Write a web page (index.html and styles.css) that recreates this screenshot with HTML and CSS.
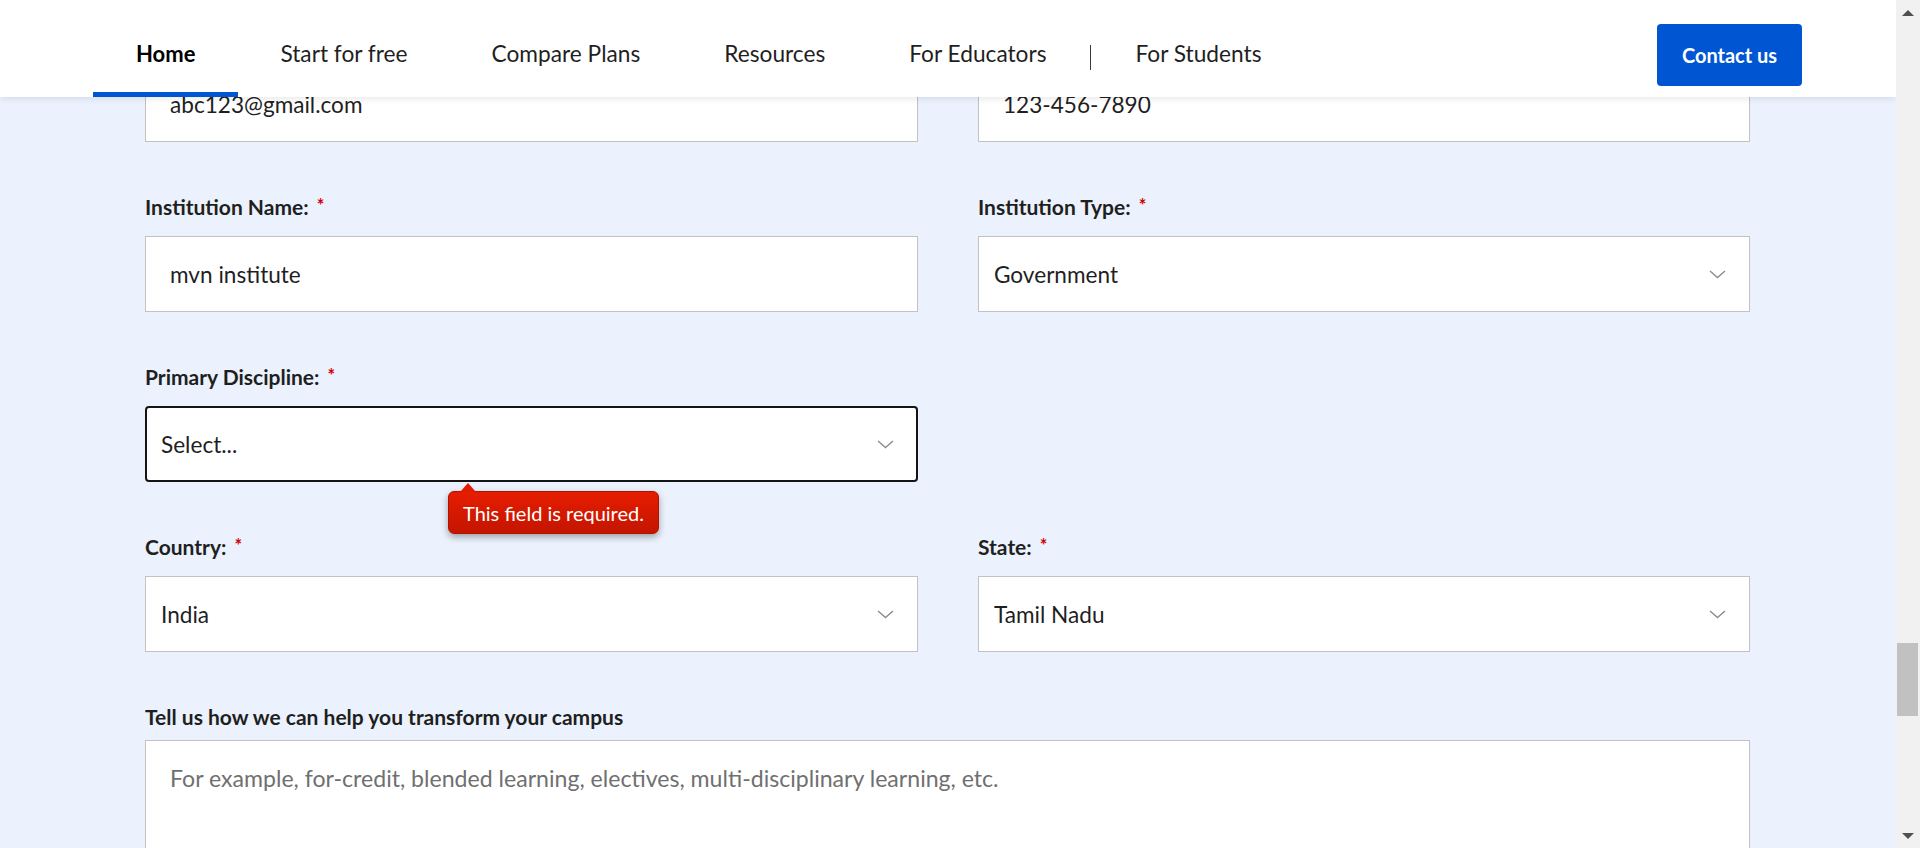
FILE: index.html
```html
<!DOCTYPE html>
<html lang="en">
<head>
<meta charset="utf-8">
<title>Contact form</title>
<link rel="stylesheet" href="styles.css">
</head>
<body>
<div class="viewport">
  <div class="page">
    <header class="nav">
      <nav class="nav-links">
        <a class="nav-link active" href="#">Home</a>
        <a class="nav-link" href="#">Start for free</a>
        <a class="nav-link" href="#">Compare Plans</a>
        <a class="nav-link" href="#">Resources</a>
        <a class="nav-link" href="#">For Educators</a>
        <span class="nav-sep"></span>
        <a class="nav-link" href="#">For Students</a>
      </nav>
      <a class="contact-btn" href="#">Contact us</a>
    </header>

    <form class="form">
      <div class="field">
        <div class="label label-hidden"></div>
        <input class="text-input" type="text" aria-label="Email" value="abc123@gmail.com">
      </div>
      <div class="field">
        <div class="label label-hidden"></div>
        <input class="text-input" type="text" aria-label="Phone" value="123-456-7890">
      </div>

      <div class="field">
        <label class="label">Institution Name:<span class="req">*</span></label>
        <input class="text-input" type="text" value="mvn institute">
      </div>
      <div class="field">
        <label class="label">Institution Type:<span class="req">*</span></label>
        <div class="select-wrap">
          <select class="select"><option>Government</option></select>
          <svg class="chev" width="17" height="9" viewBox="0 0 17 9"><polyline points="1,1 8.5,7.5 16,1" fill="none" stroke="#8c8c8c" stroke-width="1.4"/></svg>
        </div>
      </div>

      <div class="field">
        <label class="label">Primary Discipline:<span class="req">*</span></label>
        <div class="select-wrap">
          <select class="select select-focus"><option>Select...</option></select>
          <svg class="chev" width="17" height="9" viewBox="0 0 17 9"><polyline points="1,1 8.5,7.5 16,1" fill="none" stroke="#8c8c8c" stroke-width="1.4"/></svg>
          <div class="tooltip">This field is required.</div>
        </div>
      </div>
      <div class="field"></div>

      <div class="field">
        <label class="label">Country:<span class="req">*</span></label>
        <div class="select-wrap">
          <select class="select"><option>India</option></select>
          <svg class="chev" width="17" height="9" viewBox="0 0 17 9"><polyline points="1,1 8.5,7.5 16,1" fill="none" stroke="#8c8c8c" stroke-width="1.4"/></svg>
        </div>
      </div>
      <div class="field">
        <label class="label">State:<span class="req">*</span></label>
        <div class="select-wrap">
          <select class="select"><option>Tamil Nadu</option></select>
          <svg class="chev" width="17" height="9" viewBox="0 0 17 9"><polyline points="1,1 8.5,7.5 16,1" fill="none" stroke="#8c8c8c" stroke-width="1.4"/></svg>
        </div>
      </div>

      <div class="field field-wide">
        <label class="label label-tight">Tell us how we can help you transform your campus</label>
        <textarea class="textarea" placeholder="For example, for-credit, blended learning, electives, multi-disciplinary learning, etc."></textarea>
      </div>
    </form>
  </div>

  <div class="scrollbar">
    <div class="sb-btn"><span class="arrow-up"></span></div>
    <div class="sb-track"><div class="sb-thumb"></div></div>
    <div class="sb-btn"><span class="arrow-down"></span></div>
  </div>
</div>
</body>
</html>
```

FILE: styles.css
```css
* { box-sizing: border-box; }

html, body {
  margin: 0;
  padding: 0;
  height: 848px;
  overflow: hidden;
}

body {
  font-family: Lato, "Noto Sans", sans-serif;
  color: #1f1f1f;
}

.viewport {
  display: flex;
  width: 1920px;
  height: 848px;
}

.page {
  flex: 1;
  position: relative;
  overflow: hidden;
  background: #ebf2fd;
}

/* ---------- header ---------- */
.nav {
  position: absolute;
  top: 0;
  left: 0;
  right: 0;
  height: 97px;
  padding: 10px 94px 0 93px;
  background: #ffffff;
  box-shadow: 0 2px 7px rgba(0, 0, 0, 0.09);
  display: flex;
  justify-content: space-between;
  align-items: stretch;
  z-index: 5;
}

.nav-links {
  display: flex;
  align-items: stretch;
}

.nav-link {
  position: relative;
  display: flex;
  align-items: center;
  padding: 0 42px;
  font-size: 22.7px;
  color: #1f1f1f;
  text-decoration: none;
  white-space: nowrap;
}

.nav-link.active {
  font-weight: 700;
  color: #000;
  font-size: 22px;
  padding: 0 43px;
}

.nav-link.active::after {
  content: "";
  position: absolute;
  left: 0;
  right: 0;
  bottom: 0;
  height: 5px;
  background: #0056d2;
}

.nav-sep {
  align-self: center;
  width: 1px;
  height: 25px;
  margin: 8px 2px 0 2px;
  background: #3a3a3a;
}

.contact-btn {
  align-self: center;
  margin-top: 3px;
  width: 145px;
  height: 62px;
  border-radius: 4px;
  background: #0056d2;
  color: #fff;
  font-size: 20px;
  font-weight: 700;
  text-decoration: none;
  display: flex;
  align-items: center;
  justify-content: center;
}

/* ---------- form ---------- */
.form {
  display: grid;
  grid-template-columns: 773px 772px;
  column-gap: 60px;
  row-gap: 53px;
  padding: 25px 0 0 145px;
}

.field {
  display: flex;
  flex-direction: column;
}

.field-wide {
  grid-column: 1 / -1;
}

.label {
  display: flex;
  align-items: center;
  height: 24px;
  padding-bottom: 2px;
  margin-bottom: 17px;
  font-size: 21px;
  font-weight: 700;
  color: #1f1f1f;
}

.label-tight {
  margin-bottom: 11px;
}

.req {
  color: #d10000;
  font-size: 18px;
  margin-left: 8px;
  position: relative;
  top: -1px;
}

.text-input {
  height: 76px;
  border: 1px solid #c2c2c2;
  border-radius: 0;
  background: #fff;
  padding: 0 24px;
  font-family: Lato, "Noto Sans", sans-serif;
  font-size: 22.6px;
  color: #1f1f1f;
  outline: none;
}

.select-wrap {
  position: relative;
  display: flex;
}

.select {
  flex: 1;
  height: 76px;
  border: 1px solid #c2c2c2;
  border-radius: 0;
  background: #fff;
  padding: 0 50px 0 15px;
  font-family: Lato, "Noto Sans", sans-serif;
  font-size: 22.6px;
  color: #1f1f1f;
  appearance: none;
  -webkit-appearance: none;
  outline: none;
}

.select-focus {
  border: 2px solid #141414;
  border-radius: 4px;
  padding-left: 14px;
}

.chev {
  position: absolute;
  right: 24px;
  top: 34px;
  pointer-events: none;
}

.tooltip {
  position: absolute;
  left: 303px;
  top: 85px;
  width: 211px;
  height: 43px;
  border: 1px solid #b01200;
  border-radius: 6px;
  background: linear-gradient(#e61d00, #c41500);
  box-shadow: 0 3px 7px rgba(0, 0, 0, 0.35);
  color: #fff;
  font-size: 20px;
  display: flex;
  align-items: center;
  justify-content: center;
  white-space: nowrap;
  z-index: 3;
}

.tooltip::before {
  content: "";
  position: absolute;
  left: 11px;
  top: -9px;
  border-left: 8px solid transparent;
  border-right: 8px solid transparent;
  border-bottom: 9px solid #e21b00;
}

.textarea {
  height: 200px;
  border: 1px solid #c2c2c2;
  border-radius: 0;
  background: #fff;
  padding: 23px 24px;
  font-family: Lato, "Noto Sans", sans-serif;
  font-size: 23.1px;
  line-height: 28px;
  color: #1f1f1f;
  resize: none;
  outline: none;
}

.textarea::placeholder {
  color: #707070;
}

/* ---------- scrollbar ---------- */
.scrollbar {
  width: 24px;
  background: #f1f1f1;
  display: flex;
  flex-direction: column;
}

.sb-btn {
  height: 25px;
  display: flex;
  align-items: center;
  justify-content: center;
}

.arrow-up {
  width: 0;
  height: 0;
  border-left: 6px solid transparent;
  border-right: 6px solid transparent;
  border-bottom: 6px solid #505050;
}

.arrow-down {
  width: 0;
  height: 0;
  border-left: 6px solid transparent;
  border-right: 6px solid transparent;
  border-top: 6px solid #505050;
}

.sb-track {
  flex: 1;
}

.sb-thumb {
  margin: 618px 2px 0 1px;
  height: 73px;
  background: #c1c1c1;
}
```
